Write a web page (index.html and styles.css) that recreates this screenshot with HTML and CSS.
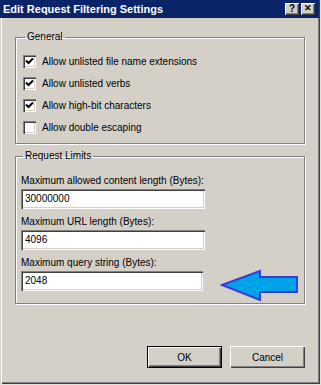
FILE: index.html
```html
<!DOCTYPE html>
<html lang="en">
<head>
  <meta charset="UTF-8">
  <title>Edit Request Filtering Settings</title>
  <link rel="stylesheet" href="styles.css">
</head>
<body>
  <div class="window">
    <div class="titlebar">
      <span class="title">Edit Request Filtering Settings</span>
      <div class="title-buttons">
        <span class="title-btn">?</span>
        <span class="title-btn close">&#x2715;</span>
      </div>
    </div>

    <div class="content">
      <fieldset class="group general">
        <legend>General</legend>
        <label class="check-row">
          <span class="checkbox checked"><svg width="9" height="9" viewBox="0 0 9 9"><path d="M1 3.5 L3.5 6 L8 1.5" fill="none" stroke="#000" stroke-width="2"/></svg></span>
          Allow unlisted file name extensions
        </label>
        <label class="check-row">
          <span class="checkbox checked"><svg width="9" height="9" viewBox="0 0 9 9"><path d="M1 3.5 L3.5 6 L8 1.5" fill="none" stroke="#000" stroke-width="2"/></svg></span>
          Allow unlisted verbs
        </label>
        <label class="check-row">
          <span class="checkbox checked"><svg width="9" height="9" viewBox="0 0 9 9"><path d="M1 3.5 L3.5 6 L8 1.5" fill="none" stroke="#000" stroke-width="2"/></svg></span>
          Allow high-bit characters
        </label>
        <label class="check-row">
          <span class="checkbox"></span>
          Allow double escaping
        </label>
      </fieldset>

      <fieldset class="group limits">
        <legend>Request Limits</legend>
        <div class="field">
          <div class="field-label">Maximum allowed content length (Bytes):</div>
          <div class="textbox">30000000</div>
        </div>
        <div class="field">
          <div class="field-label">Maximum URL length (Bytes):</div>
          <div class="textbox">4096</div>
        </div>
        <div class="field">
          <div class="field-label">Maximum query string (Bytes):</div>
          <div class="textbox short">2048</div>
        </div>

        <!-- annotation arrow pointing at the query string box -->
        <svg class="arrow" width="80" height="33" viewBox="0 0 80 33">
          <polygon points="2,16 40,2 40,8 77,8 77,23 40,23 40,31" fill="#00a2e8" stroke="#3b3bd6" stroke-width="2" stroke-linejoin="miter"/>
        </svg>
      </fieldset>

      <div class="buttons">
        <button class="btn default">OK</button>
        <button class="btn">Cancel</button>
      </div>
    </div>
  </div>
</body>
</html>
```

FILE: styles.css
```css
body {
  margin: 0;
  background: #e4e2de;
  font-family: "Liberation Sans", Arial, sans-serif;
  font-size: 10px;
  color: #000;
}

.window {
  width: 320px;
  height: 384px;
  box-sizing: border-box;
  background: #d4d0c8;
  box-shadow: inset 1px 0 #d4d0c8, inset 2px 0 #ffffff, inset -1px -1px #404040, inset -2px -2px #808080;
  display: flex;
  flex-direction: column;
}

.titlebar {
  height: 18px;
  margin-right: 1px;
  background: #0a246a;
  color: #ffffff;
  display: flex;
  align-items: center;
  justify-content: space-between;
  padding: 0 4px 0 3px;
}

.title {
  font-weight: bold;
  font-size: 11px;
}

.title-buttons {
  display: flex;
  gap: 2px;
}

.title-btn {
  width: 14px;
  height: 12px;
  box-sizing: border-box;
  background: #d4d0c8;
  color: #000;
  font-weight: bold;
  font-size: 10px;
  line-height: 11px;
  text-align: center;
  box-shadow: inset 1px 1px #ffffff, inset -1px -1px #404040, inset -2px -2px #808080;
}

.title-btn.close {
  font-size: 9px;
}

.content {
  padding: 12px 15px 0 15px;
  display: flex;
  flex-direction: column;
}

.group {
  margin: 0;
  border: 1px solid #808080;
  box-shadow: 1px 1px 0 #ffffff, inset 1px 1px 0 #ffffff;
  position: relative;
}

.group legend {
  padding: 0 2px;
  margin-left: 2px;
  line-height: 14px;
}

.general {
  padding: 6px 5px 5px 7px;
}

.check-row {
  height: 22px;
  display: flex;
  align-items: center;
  gap: 6px;
}

.checkbox {
  width: 13px;
  height: 13px;
  box-sizing: border-box;
  background: #ffffff;
  box-shadow: inset 1px 1px #808080, inset 2px 2px #404040, inset -1px -1px #ffffff, inset -2px -2px #d4d0c8;
  display: flex;
  align-items: center;
  justify-content: center;
}

.limits {
  margin-top: 5px;
  padding: 11px 5px 12px 5px;
}

.field {
  margin-bottom: 6px;
}

.field:last-of-type {
  margin-bottom: 0;
}

.field-label {
  line-height: 13px;
  margin-bottom: 2px;
}

.textbox {
  width: 184px;
  height: 20px;
  box-sizing: border-box;
  padding: 0 4px;
  line-height: 20px;
  background: #ffffff;
  box-shadow: inset 1px 1px #808080, inset 2px 2px #404040, inset -1px -1px #ffffff, inset -2px -2px #d4d0c8;
}

.textbox.short {
  width: 182px;
}

.arrow {
  position: absolute;
  left: 204px;
  top: 106px;
}

.buttons {
  margin-top: 42px;
  display: flex;
  justify-content: flex-end;
  gap: 8px;
}

.btn {
  width: 75px;
  height: 22px;
  border: none;
  background: #d4d0c8;
  font-family: "Liberation Sans", Arial, sans-serif;
  font-size: 10px;
  color: #000;
  box-shadow: inset 1px 1px #ffffff, inset -1px -1px #404040, inset -2px -2px #808080;
}

.btn.default {
  box-shadow: inset 0 0 0 1px #000000, inset 2px 2px #ffffff, inset -2px -2px #404040, inset -3px -3px #808080;
}
```
